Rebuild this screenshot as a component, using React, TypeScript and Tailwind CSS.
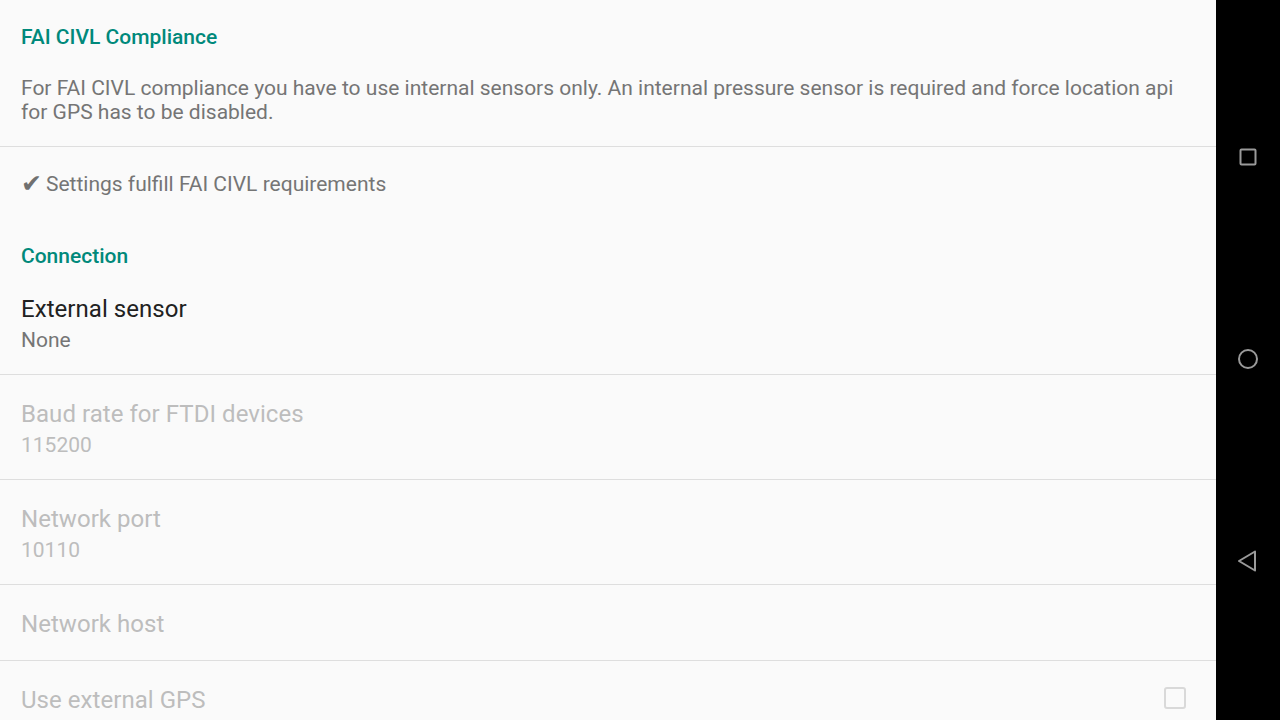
import React from 'react';

// Android preference screen: connection settings
type Pref = {
  title: string;
  summary?: string;
  enabled?: boolean;
  checkbox?: boolean;
};

const connectionPrefs: Pref[] = [
  { title: 'External sensor', summary: 'None', enabled: true },
  { title: 'Baud rate for FTDI devices', summary: '115200' },
  { title: 'Network port', summary: '10110' },
  { title: 'Network host' },
  { title: 'Use external GPS', checkbox: true },
];

function Category({ label, className = '' }: { label: string; className?: string }) {
  return (
    <div className={`px-[21px] text-[21px] leading-[24px] font-medium text-[#00897b] ${className}`}>
      {label}
    </div>
  );
}

function PrefRow({ pref, first, last }: { pref: Pref; first: boolean; last: boolean }) {
  const titleColor = pref.enabled ? 'text-[#212121]' : 'text-[#bdbdbd]';
  const summaryColor = pref.enabled ? 'text-[#757575]' : 'text-[#bdbdbd]';
  return (
    <div
      className={`flex items-start pl-[21px] pr-[30px] ${first ? 'pt-[25px]' : 'pt-[23px]'} ${
        pref.summary ? 'pb-[22px]' : 'pb-[20px]'
      } ${last ? '' : 'border-b border-[#dedede]'}`}
    >
      <div className="flex-1">
        <div className={`text-[24px] leading-[32px] tracking-[0.05px] ${titleColor}`}>{pref.title}</div>
        {pref.summary && (
          <div className={`mt-[3px] text-[21px] leading-[24px] ${summaryColor}`}>{pref.summary}</div>
        )}
      </div>
      {pref.checkbox && (
        <div className="mt-[3px] w-[22px] h-[22px] rounded-[3px] border-2 border-[#d9d9d9]" />
      )}
    </div>
  );
}

function NavBar() {
  return (
    <div className="w-[64px] h-full bg-black flex flex-col items-center justify-center gap-[154px] pb-[3px]">
      <div className="h-[48px] flex items-center justify-center">
        <svg width="20" height="20" viewBox="0 0 20 20">
          <rect x="2.5" y="2.5" width="15" height="15" rx="1" fill="none" stroke="#9a9a9a" strokeWidth="2" />
        </svg>
      </div>
      <div className="h-[48px] flex items-center justify-center">
        <svg width="22" height="22" viewBox="0 0 22 22">
          <circle cx="11" cy="11" r="9" fill="none" stroke="#9a9a9a" strokeWidth="2" />
        </svg>
      </div>
      <div className="h-[48px] flex items-center justify-center">
        <svg width="22" height="22" viewBox="0 0 22 22">
          <path d="M18 1.5 L2 11 L18 20.5 Z" fill="none" stroke="#9a9a9a" strokeWidth="2" strokeLinejoin="round" />
        </svg>
      </div>
    </div>
  );
}

export default function App() {
  return (
    <div
      className="w-[1280px] h-[720px] flex overflow-hidden bg-[#fafafa]"
      style={{ fontFamily: 'Roboto, "Noto Sans", "DejaVu Sans", sans-serif' }}
    >
      <div className="flex-1 flex flex-col overflow-hidden">
        {/* FAI CIVL section */}
        <div className="pt-[25px] pb-[22px] border-b border-[#dedede]">
          <Category label="FAI CIVL Compliance" />
          <p className="mt-[27px] pl-[21px] pr-[14px] text-[21px] leading-[24px] text-[#757575]">
            For FAI CIVL compliance you have to use internal sensors only. An internal pressure sensor is required
            and force location api for GPS has to be disabled.
          </p>
        </div>
        <div className="pt-[25px] px-[21px] text-[21px] leading-[24px] text-[#757575] flex items-center">
          <span className="text-[25px] leading-[24px] text-[#707070] mr-[4px]">✔</span>
          <span>Settings fulfill FAI CIVL requirements</span>
        </div>

        {/* Connection section */}
        <Category label="Connection" className="mt-[48px]" />
        <div className="flex flex-col">
          {connectionPrefs.map((p, i) => (
            <PrefRow key={p.title} pref={p} first={i === 0} last={i === connectionPrefs.length - 1} />
          ))}
        </div>
      </div>
      <NavBar />
    </div>
  );
}
